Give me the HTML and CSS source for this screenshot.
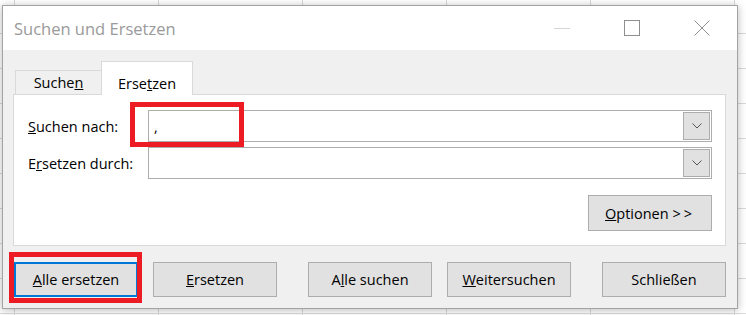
FILE: index.html
```html
<!DOCTYPE html>
<html lang="de">
<head>
    <meta charset="UTF-8">
    <meta name="viewport" content="width=device-width, initial-scale=1.0">
    <title>Suchen und Ersetzen</title>
    <link rel="stylesheet" href="styles.css">
</head>
<body>
    <div class="dialog">
        <div class="titlebar">
            <span class="title">Suchen und Ersetzen</span>
            <span class="caption-btn minimize">
                <svg width="16" height="16" viewBox="0 0 16 16"><line x1="0" y1="8.5" x2="16" y2="8.5"/></svg>
            </span>
            <span class="caption-btn">
                <svg width="16" height="16" viewBox="0 0 16 16"><rect x="0.5" y="0.5" width="15" height="15"/></svg>
            </span>
            <span class="caption-btn">
                <svg width="16" height="16" viewBox="0 0 16 16"><path d="M0.5 0.5 L15.5 15.5 M15.5 0.5 L0.5 15.5"/></svg>
            </span>
        </div>

        <div class="dialog-body">
            <div class="tabs">
                <div class="tab">Suche<u>n</u></div>
                <div class="tab active">Erse<u>t</u>zen</div>
            </div>

            <div class="panel">
                <div class="form">
                    <label class="label"><u>S</u>uchen nach:</label>
                    <div class="combo marked">
                        <span class="value">,</span>
                        <span class="drop">
                            <svg width="10" height="6" viewBox="0 0 10 6"><path d="M0.5 0.5 L5 5 L9.5 0.5"/></svg>
                        </span>
                    </div>
                    <label class="label">E<u>r</u>setzen durch:</label>
                    <div class="combo">
                        <span class="value"></span>
                        <span class="drop">
                            <svg width="10" height="6" viewBox="0 0 10 6"><path d="M0.5 0.5 L5 5 L9.5 0.5"/></svg>
                        </span>
                    </div>
                </div>
                <div class="options-row">
                    <button class="btn"><u>O</u>ptionen <span class="arrows">&gt;&gt;</span></button>
                </div>
            </div>

            <div class="actions">
                <button class="btn focused marked"><u>A</u>lle ersetzen</button>
                <button class="btn"><u>E</u>rsetzen</button>
                <button class="btn wide-gap">A<u>l</u>le suchen</button>
                <button class="btn"><u>W</u>eitersuchen</button>
                <button class="btn wide-gap">Schließen</button>
            </div>
        </div>
    </div>
</body>
</html>
```

FILE: styles.css
```css
body {
    margin: 0;
    font-family: 'Open Sans', 'Noto Sans', sans-serif;
    font-size: 14.5px;
    color: #000;
    background-color: #fff;
    background-image:
        linear-gradient(to right, #dadada 1px, transparent 1px),
        linear-gradient(to bottom, #dadada 1px, transparent 1px);
    background-size: 144px 35px;
    background-position: 14px 33px;
    height: 315px;
    overflow: hidden;
}
.dialog {
    margin: 5px 0 0 2px;
    width: 736px;
    height: 304px;
    box-sizing: border-box;
    border: 1px solid #a3a3a3;
    background: #f0f0f0;
    box-shadow: 0 1px 8px rgba(0, 0, 0, 0.28);
    display: flex;
    flex-direction: column;
}
.titlebar {
    height: 44px;
    flex: none;
    background: #fff;
    display: flex;
    align-items: center;
}
.title {
    flex: 1;
    padding-left: 11px;
    font-size: 16.5px;
    color: #9a9a9a;
}
.caption-btn {
    width: 70px;
    height: 44px;
    display: flex;
    align-items: center;
    justify-content: center;
}
.caption-btn svg {
    fill: none;
    stroke: #8e8e8e;
    stroke-width: 1;
}
.caption-btn.minimize svg {
    stroke: #d6d6d6;
}
.dialog-body {
    flex: 1;
    padding: 11px 11px 0 10px;
}
.tabs {
    height: 33px;
    display: flex;
    align-items: flex-end;
    padding-left: 2px;
}
.tab {
    box-sizing: border-box;
    height: 24px;
    width: 87px;
    border: 1px solid #d9d9d9;
    border-bottom: none;
    text-align: center;
    line-height: 20px;
    padding-top: 2px;
}
.tab.active {
    position: relative;
    z-index: 1;
    width: 92px;
    height: 34px;
    margin-bottom: -1px;
    margin-left: -1px;
    padding-top: 12px;
    background: #fff;
}
.panel {
    box-sizing: border-box;
    height: 152px;
    border: 1px solid #d9d9d9;
    background: #fff;
    padding: 15px 13px 0 14px;
}
.form {
    display: grid;
    grid-template-columns: 120px 1fr;
    grid-template-rows: 32px 32px;
    row-gap: 5px;
    align-items: center;
}
.combo {
    position: relative;
    box-sizing: border-box;
    height: 32px;
    border: 1px solid #adadad;
    display: flex;
    align-items: center;
    justify-content: space-between;
}
.combo .value {
    padding-left: 5px;
}
.drop {
    box-sizing: border-box;
    width: 27px;
    height: 28px;
    margin-right: 1px;
    background: #e1e1e1;
    border: 1px solid #adadad;
    display: flex;
    align-items: center;
    justify-content: center;
}
.drop svg {
    fill: none;
    stroke: #555;
    stroke-width: 1;
}
.options-row {
    display: flex;
    justify-content: flex-end;
    margin-top: 16px;
}
.options-row .btn {
    height: 36px;
}
.arrows {
    letter-spacing: 3px;
}
.btn {
    position: relative;
    box-sizing: border-box;
    width: 124px;
    height: 35px;
    padding: 0;
    font-family: inherit;
    font-size: 14.5px;
    color: #000;
    background: #e1e1e1;
    border: 1px solid #adadad;
}
.btn.focused {
    border: 2px solid #0078d7;
}
.actions {
    display: flex;
    gap: 15px;
    margin-top: 16px;
    padding-left: 1px;
}
.actions .wide-gap {
    margin-left: 16px;
}
.marked::after {
    content: "";
    position: absolute;
    box-sizing: border-box;
    border: 5px solid #ed1c24;
}
.combo.marked::after {
    left: -19px;
    top: -9px;
    width: 114px;
    height: 45px;
}
.btn.marked::after {
    left: -7px;
    top: -12px;
    right: -6px;
    bottom: -8px;
}
```
